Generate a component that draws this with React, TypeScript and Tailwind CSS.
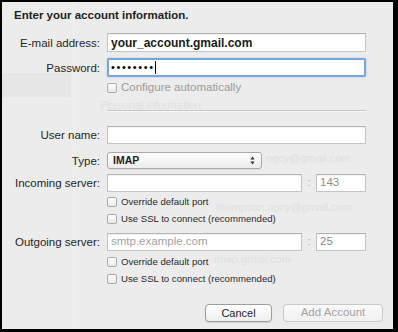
import React from "react";

const Checkbox = () => (
  <div className="w-[10px] h-[10px] rounded-[2px] border border-[#a9a9a9] bg-gradient-to-b from-white to-[#e9e9e9] shrink-0" />
);

const Label = ({ children }: { children: React.ReactNode }) => (
  <div className="w-[99px] text-right pr-[1px] text-[11.5px] leading-[14px] text-[#262626] shrink-0">{children}</div>
);

const inputCls =
  "bg-white border border-[#c4c4c4] border-t-[#b3b3b3] shadow-[inset_0_1px_1px_rgba(0,0,0,0.06)]";

const CheckRow = ({ text, mt, small, gray }: { text: string; mt: string; small?: boolean; gray?: boolean }) => (
  <div className={`flex items-center h-[14px] ${mt}`}>
    <div className="w-[105px] shrink-0" />
    <Checkbox />
    <span
      className={`ml-[4px] whitespace-nowrap ${small ? "text-[9.6px]" : "text-[11.5px]"} ${gray ? "text-[#9b9b9b]" : "text-[#2a2a2a]"}`}
    >
      {text}
    </span>
  </div>
);

export default function App() {
  return (
    <div className="w-[398px] h-[332px] bg-black pt-[2px] pl-[2px] pr-[5px] pb-[3px]">
      <div className="relative h-full bg-[#ececec] font-['Liberation_Sans',Arial,sans-serif] text-[#222] overflow-hidden">
        {/* faint ghost of the window behind */}
        <div className="absolute left-0 top-[71px] w-[69px] h-[24px] bg-[#e6e6e6]" />
        <div className="absolute left-[71px] top-0 w-[1px] h-full bg-[#f0f0f0]" />
        <div className="absolute inset-0 text-[#e0e0e0] text-[11px] whitespace-nowrap">
          <span className="absolute left-[98px] top-[95px]">Personal information</span>
          <span className="absolute left-[264px] top-[148px]">ngcy@gmail.com</span>
          <span className="absolute left-[214px] top-[197px]">thompson.ngcy@gmail.com</span>
          <span className="absolute left-[212px] top-[249px]">imap.gmail.com</span>
        </div>

        <div className="relative flex flex-col">
          <div className="mt-[6px] pl-[12px] text-[11.5px] leading-[14px] font-bold text-[#1e1e1e] whitespace-nowrap">
            Enter your account information.
          </div>

          {/* E-mail */}
          <div className="flex items-center mt-[11px] h-[19px]">
            <Label>E-mail address:</Label>
            <div className={`ml-[6px] w-[259px] h-[19px] flex items-center pl-[3px] ${inputCls}`}>
              <span className="text-[12px] font-bold text-[#1a1a1a] whitespace-nowrap">your_account.gmail.com</span>
            </div>
          </div>

          {/* Password */}
          <div className="flex items-center mt-[6px] h-[19px]">
            <Label>Password:</Label>
            <div className="ml-[6px] w-[259px] h-[19px] flex items-center pl-[2px] bg-white border-2 border-[#79a5de] rounded-[2px] shadow-[0_0_2px_#9dbde8]">
              <span className="text-[11px] tracking-[1.6px] text-black leading-none">••••••••</span>
              <div className="w-[1px] h-[13px] bg-black" />
            </div>
          </div>

          <CheckRow text="Configure automatically" mt="mt-[4px]" gray />

          {/* separator */}
          <div className="flex mt-[15px]">
            <div className="w-[105px] shrink-0" />
            <div className="w-[259px]">
              <div className="h-[1px] bg-[#c6c6c6]" />
              <div className="h-[1px] bg-[#f7f7f7]" />
            </div>
          </div>

          {/* User name */}
          <div className="flex items-center mt-[14px] h-[18px]">
            <Label>User name:</Label>
            <div className={`ml-[6px] w-[259px] h-[18px] ${inputCls}`} />
          </div>

          {/* Type */}
          <div className="flex items-center mt-[8px] h-[17px]">
            <Label>Type:</Label>
            <div className="ml-[6px] w-[155px] h-[17px] flex items-center justify-between pl-[5px] pr-[6px] rounded-[3px] border border-[#a8a8a8] bg-gradient-to-b from-white to-[#ececec] shadow-[0_1px_0_rgba(0,0,0,0.06)]">
              <span className="text-[10.5px] font-bold text-[#1e1e1e]">IMAP</span>
              <svg width="5" height="9" viewBox="0 0 5 9">
                <path d="M2.5 0.5 L4.6 3.4 L0.4 3.4 Z" fill="#333" />
                <path d="M2.5 8.5 L4.6 5.6 L0.4 5.6 Z" fill="#333" />
              </svg>
            </div>
          </div>

          {/* Incoming server */}
          <div className="flex items-center mt-[5px] h-[18px]">
            <Label>Incoming server:</Label>
            <div className={`ml-[6px] w-[195px] h-[18px] ${inputCls}`} />
            <div className="w-[14px] text-center text-[11.5px] text-[#a8a8a8]">:</div>
            <div className={`w-[50px] h-[18px] flex items-center pl-[3px] ${inputCls}`}>
              <span className="text-[11.5px] text-[#8c8c8c]">143</span>
            </div>
          </div>

          <CheckRow text="Override default port" mt="mt-[3px]" small />
          <CheckRow text="Use SSL to connect (recommended)" mt="mt-[3px]" small />

          {/* Outgoing server */}
          <div className="flex items-center mt-[7px] h-[18px]">
            <Label>Outgoing server:</Label>
            <div className={`ml-[6px] w-[195px] h-[18px] flex items-center pl-[3px] ${inputCls}`}>
              <span className="text-[11.5px] text-[#a2a2a2]">smtp.example.com</span>
            </div>
            <div className="w-[14px] text-center text-[11.5px] text-[#a8a8a8]">:</div>
            <div className={`w-[50px] h-[18px] flex items-center pl-[3px] ${inputCls}`}>
              <span className="text-[11.5px] text-[#8c8c8c]">25</span>
            </div>
          </div>

          <CheckRow text="Override default port" mt="mt-[4px]" small />
          <CheckRow text="Use SSL to connect (recommended)" mt="mt-[3px]" small />

          {/* Buttons */}
          <div className="flex justify-end gap-[11px] pr-[10px] mt-[18px]">
            <div className="w-[67px] h-[18px] flex items-center justify-center rounded-[4px] border border-[#9d9d9d] bg-gradient-to-b from-white to-[#efefef] shadow-[0_1px_1px_rgba(0,0,0,0.12)]">
              <span className="text-[11px] text-[#1e1e1e]">Cancel</span>
            </div>
            <div className="w-[100px] h-[18px] flex items-center justify-center rounded-[4px] border border-[#c9c9c9] bg-gradient-to-b from-[#fafafa] to-[#f0f0f0]">
              <span className="text-[11.5px] text-[#a3a3a3]">Add Account</span>
            </div>
          </div>
        </div>
      </div>
    </div>
  );
}
